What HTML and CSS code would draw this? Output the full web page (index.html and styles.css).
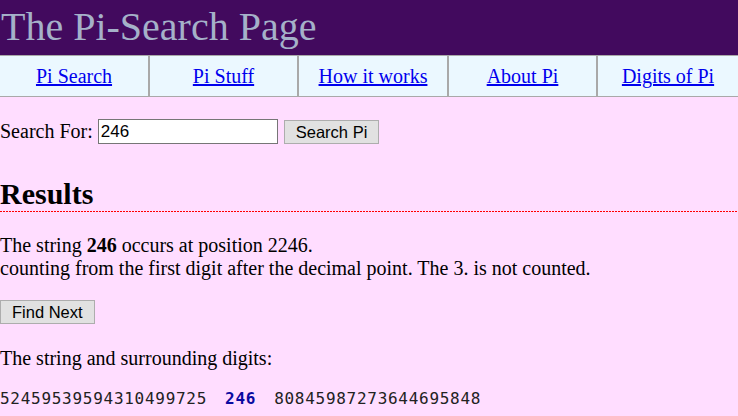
FILE: index.html
```html
<!DOCTYPE html>
<html>
<head>
<meta charset="utf-8">
<title>The Pi-Search Page</title>
<link rel="stylesheet" href="styles.css">
</head>
<body>
<div class="header"><h1 class="title">The Pi-Search Page</h1></div>
<nav class="nav">
  <div class="cell"><a href="#">Pi Search</a></div>
  <div class="cell"><a href="#">Pi Stuff</a></div>
  <div class="cell"><a href="#">How it works</a></div>
  <div class="cell"><a href="#">About Pi</a></div>
  <div class="cell"><a href="#">Digits of Pi</a></div>
</nav>
<form class="search">
  <label class="label">Search For:</label>
  <input class="field" type="text" value="246">
  <button class="btn" type="button">Search Pi</button>
</form>
<h2 class="results">Results</h2>
<p class="para">The string <b>246</b> occurs at position 2246.<br>counting from the first digit after the decimal point. The 3. is not counted.</p>
<div class="next"><button class="btn" type="button">Find Next</button></div>
<p class="para surround">The string and surrounding digits:</p>
<div class="digits"><span>52459539594310499725</span><span class="hit">246</span><span>80845987273644695848</span></div>
</body>
</html>
```
FILE: styles.css
```css
html, body {
  margin: 0;
  padding: 0;
}
body {
  background: #ffddff;
  font-family: "Liberation Serif", "Times New Roman", serif;
  font-size: 20px;
  color: #000;
}
.header {
  background: #420a5e;
  height: 55px;
}
.title {
  margin: 0;
  padding: 4px 0 0 1px;
  font-size: 40px;
  line-height: 46px;
  font-weight: normal;
  color: #a5b1c9;
}
.nav {
  display: flex;
  background: #ebf8ff;
  border-top: 1px solid #a9a9a9;
  border-bottom: 1px solid #a9a9a9;
}
.cell {
  box-sizing: border-box;
  height: 40px;
  display: flex;
  align-items: center;
  justify-content: center;
  border-left: 2px solid #a9a9a9;
}
.cell:nth-child(1) {
  width: 148px;
  border-left: none;
}
.cell:nth-child(2) {
  width: 149px;
}
.cell:nth-child(3) {
  width: 150px;
}
.cell:nth-child(4) {
  width: 149px;
}
.cell:nth-child(5) {
  flex: 1;
}
.cell a {
  color: #0000ee;
  font-size: 20px;
}
.search {
  display: flex;
  align-items: center;
  margin: 22px 0 0 0;
  height: 25px;
}
.label {
  margin-right: 5px;
}
.field {
  box-sizing: border-box;
  width: 180px;
  height: 25px;
  border: 1px solid #767676;
  background: #fff;
  padding: 0 2px;
  font-family: "Liberation Sans", Arial, sans-serif;
  font-size: 17px;
  margin: 0 6px 0 0;
}
.btn {
  box-sizing: border-box;
  height: 24px;
  background: #e1e1e1;
  border: 1px solid #adadad;
  padding: 0 11px;
  font-family: "Liberation Sans", Arial, sans-serif;
  font-size: 16.5px;
  color: #000;
  margin: 0;
  line-height: 20px;
}
.results {
  margin: 33px 0 0 0;
  font-size: 30px;
  line-height: 34px;
  font-weight: bold;
  padding-bottom: 1px;
}
.results::after {
  content: "";
  display: block;
  height: 1px;
  margin-top: 0;
  background: repeating-linear-gradient(to right, #ff0000 0, #ff0000 2px, transparent 2px, transparent 3px);
}
.para {
  margin: 21px 0 0 0;
  line-height: 23px;
}
.next {
  margin-top: 20px;
  display: flex;
}
.surround {
  margin-top: 23px;
}
.digits {
  margin-top: 19px;
  font-family: "DejaVu Sans Mono", monospace;
  font-size: 16px;
  letter-spacing: 0.72px;
  color: #222;
  white-space: nowrap;
}
.hit {
  font-weight: bold;
  color: #0a0aa0;
  margin: 0 18px;
}
```
